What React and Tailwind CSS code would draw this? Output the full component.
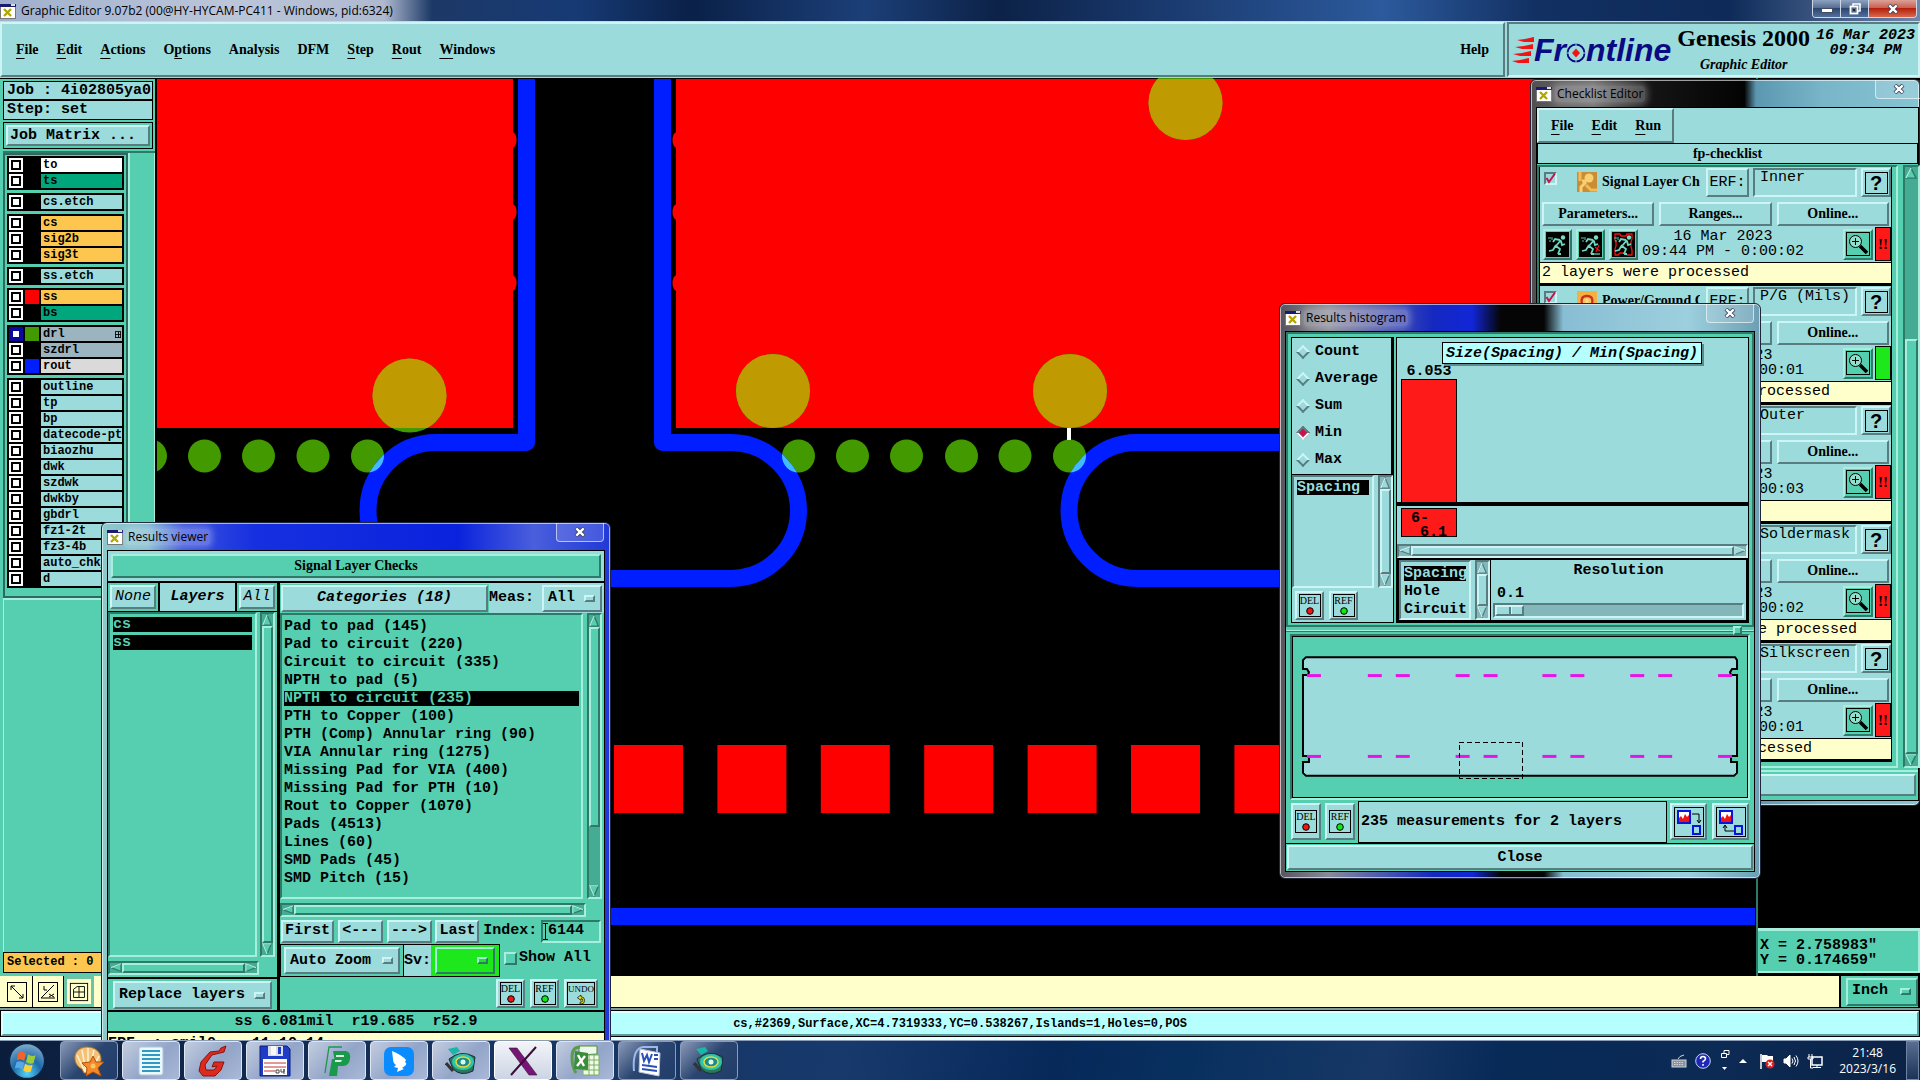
import React from "react";

const SERIF = "font-['Liberation_Serif',serif] font-bold text-[14px] leading-[18px]";
const MONO = "font-['Liberation_Mono',monospace] text-[15px] leading-[18px]";
const MONO_SM = "font-['Liberation_Mono',monospace] font-bold text-[12px] leading-[14px]";
const UI = "font-['Open_Sans',sans-serif] text-[12px] leading-4";

const CY_OUT = "border-2 border-t-[#cdf5f5] border-l-[#cdf5f5] border-b-[#587c80] border-r-[#587c80]";
const CY_IN = "border-2 border-t-[#587c80] border-l-[#587c80] border-b-[#cdf5f5] border-r-[#cdf5f5]";
const GR_OUT = "border-2 border-t-[#a8eedd] border-l-[#a8eedd] border-b-[#2d7a68] border-r-[#2d7a68]";
const GR_IN = "border-2 border-t-[#2d7a68] border-l-[#2d7a68] border-b-[#a8eedd] border-r-[#a8eedd]";

function Btn({ className = "", children, ...rest }) {
  return (
    <button type="button" className={`flex items-center justify-center whitespace-nowrap bg-[#9bdbdb] ${CY_OUT} ${className}`} {...rest}>
      {children}
    </button>
  );
}

function OptionMenu({ label, value, className = "", tone = "cyan" }) {
  const look = tone === "cyan" ? `bg-[#9bdbdb] ${CY_OUT}` : tone === "lime" ? `bg-[#1ce81c] ${GR_OUT}` : `bg-[#55cfb0] ${GR_OUT}`;
  const notch = tone === "lime" ? `${GR_OUT} bg-[#1ce81c]` : tone === "cyan" ? `${CY_OUT} bg-[#9bdbdb]` : `${GR_OUT} bg-[#55cfb0]`;
  return (
    <div className={`flex items-center pr-[5px] ${look} ${className}`}>
      <select aria-label={label} defaultValue={value} className="min-w-0 flex-1 appearance-none bg-transparent pl-1 font-bold outline-none">
        <option value={value}>{value}</option>
      </select>
      <span className={`h-[7px] w-[11px] shrink-0 ${notch}`} />
    </div>
  );
}

function Arrow({ dir, tone }) {
  const light = tone === "green" ? "#a8eedd" : "#cdf5f5";
  const dark = tone === "green" ? "#2d7a68" : "#587c80";
  const pts = {
    up: "6,1 11,12 1,12",
    down: "1,1 11,1 6,12",
    left: "1,6 12,1 12,11",
    right: "12,6 1,1 1,11",
  }[dir];
  const hi = { up: "1,12 6,1", down: "6,12 1,1 11,1", left: "1,6 12,1", right: "1,11 1,1 12,6" }[dir];
  return (
    <svg viewBox="0 0 13 13" className="block h-full w-full" preserveAspectRatio="none" aria-hidden="true">
      <polygon points={pts} fill={tone === "green" ? "#55cfb0" : "#9bdbdb"} stroke={dark} strokeWidth="1.5" />
      <polyline points={hi} fill="none" stroke={light} strokeWidth="1.5" />
    </svg>
  );
}

function VScroll({ className = "", tone = "green", before = 0, after = 0 }) {
  const inn = tone === "green" ? `${GR_IN} bg-[#45ab93]` : `${CY_IN} bg-[#84b7b9]`;
  const out = tone === "green" ? `${GR_OUT} bg-[#55cfb0]` : `${CY_OUT} bg-[#9bdbdb]`;
  return (
    <div className={`flex w-[15px] shrink-0 flex-col ${inn} ${className}`}>
      <button type="button" aria-label="Scroll up" className="h-[12px] shrink-0"><Arrow dir="up" tone={tone} /></button>
      <span style={{ flexGrow: before }} />
      <span className={`${out}`} style={{ flexGrow: 100 - before - after }} />
      <span style={{ flexGrow: after }} />
      <button type="button" aria-label="Scroll down" className="h-[12px] shrink-0"><Arrow dir="down" tone={tone} /></button>
    </div>
  );
}

function HScroll({ className = "", tone = "green" }) {
  const inn = tone === "green" ? `${GR_IN} bg-[#45ab93]` : `${CY_IN} bg-[#84b7b9]`;
  const out = tone === "green" ? `${GR_OUT} bg-[#55cfb0]` : `${CY_OUT} bg-[#9bdbdb]`;
  return (
    <div className={`flex h-[14px] shrink-0 ${inn} ${className}`}>
      <button type="button" aria-label="Scroll left" className="w-[12px] shrink-0"><Arrow dir="left" tone={tone} /></button>
      <span className={`flex-1 ${out}`} />
      <button type="button" aria-label="Scroll right" className="w-[12px] shrink-0"><Arrow dir="right" tone={tone} /></button>
    </div>
  );
}

function WinIcon() {
  return (
    <svg viewBox="0 0 16 16" className="h-4 w-4 shrink-0" shapeRendering="crispEdges" aria-hidden="true">
      <rect x="0" y="1" width="16" height="15" fill="#777" />
      <rect x="1" y="4" width="14" height="11" fill="#fff" />
      <rect x="0" y="1" width="16" height="3" fill="#1a1a70" />
      <rect x="11" y="1" width="4" height="2" fill="#ddd" />
      <path d="M4 6l7 7M11 6l-7 7" stroke="#b0a800" strokeWidth="2.4" shapeRendering="auto" />
    </svg>
  );
}

function CloseX() {
  return (
    <svg viewBox="0 0 12 10" className="h-[10px] w-3" aria-hidden="true">
      <path d="M2 1l8 8M10 1L2 9" stroke="#333a55" strokeWidth="4" />
      <path d="M2.3 1.3l7.4 7.4M9.7 1.3L2.3 8.7" stroke="#fff" strokeWidth="2.4" />
    </svg>
  );
}

function ChipIcon({ text, children }) {
  return (
    <span className="flex h-[23px] w-[22px] flex-col items-center border border-black font-['Liberation_Serif',serif] text-[10px] font-normal leading-[12px]">
      <span className="whitespace-nowrap">{text}</span>
      {children}
    </span>
  );
}
const Dot = ({ color }) => (
  <svg viewBox="0 0 8 8" className="h-2 w-2" aria-hidden="true">
    <circle cx="4" cy="4" r="3.3" fill={color} stroke="#000" />
  </svg>
);
const DelBtn = ({ className }) => (
  <Btn aria-label="Delete" className={className}><ChipIcon text="DEL"><Dot color="#f01414" /></ChipIcon></Btn>
);
const RefBtn = ({ className }) => (
  <Btn aria-label="Reference" className={className}><ChipIcon text="REF"><Dot color="#14e814" /></ChipIcon></Btn>
);

/* ---------- main window ---------- */

function TitleBar() {
  return (
    <header className={`flex h-[22px] items-center justify-between border-b border-[#c5d6e6] bg-[linear-gradient(90deg,#9fb0cd_0,#bcc6da_12%,#aeb9d0_20%,#1c3866_22.5%,#173a75_30%,#0a2148_36%,#1c3f78_45%,#0c2247_52%,#19386c_60%,#2c5a9c_72%,#123062_80%,#0d2a58_90%,#6f86ad_100%)] ${UI}`}>
      <div className="flex items-center gap-[5px]">
        <WinIcon />
        <h1>Graphic Editor 9.07b2 (00@HY-HYCAM-PC411 - Windows, pid:6324)</h1>
      </div>
      <div className="mr-[3px] flex h-[18px] self-start overflow-hidden rounded-b border border-t-0 border-[#cfd8e6]">
        <button type="button" aria-label="Minimize" className="flex w-[28px] items-center justify-center border-r border-[#cfd8e6] bg-[linear-gradient(#8ea2c0,#52698f_50%,#2d4671_50%,#50709b)]">
          <span className="mt-1 h-[5px] w-3 border border-[#444d60] bg-white" />
        </button>
        <button type="button" aria-label="Restore" className="flex w-[28px] items-center justify-center border-r border-[#cfd8e6] bg-[linear-gradient(#8ea2c0,#52698f_50%,#2d4671_50%,#50709b)]">
          <svg viewBox="0 0 12 12" className="h-3 w-3" fill="none" aria-hidden="true">
            <path d="M4 3V1h7v7H9" stroke="#fff" strokeWidth="1.6" />
            <rect x="1.5" y="3.5" width="7" height="7" fill="#54698d" stroke="#fff" strokeWidth="1.8" />
            <rect x="4" y="6" width="2" height="2" fill="#222" />
          </svg>
        </button>
        <button type="button" aria-label="Close" className="flex w-[47px] items-center justify-center bg-[linear-gradient(#dba298,#c95a4a_50%,#b5200c_50%,#d9684b)]"><CloseX /></button>
      </div>
    </header>
  );
}

const MENUS = [["", "F", "ile"], ["", "E", "dit"], ["", "A", "ctions"], ["O", "p", "tions"], ["Analysis", "", ""], ["DFM", "", ""], ["", "S", "tep"], ["", "R", "out"], ["", "W", "indows"]];
const MenuItem = ({ parts }) => (
  <button type="button">
    {parts[0]}<span className="underline decoration-1 underline-offset-4">{parts[1]}</span>{parts[2]}
  </button>
);

function FrontlineLogo() {
  return (
    <div className="flex items-center">
      <svg viewBox="0 0 22 26" className="h-[26px] w-[22px]" aria-hidden="true">
        <g fill="#f01414">
          <path d="M5 3l8-1 9-2v5H12z" />
          <path d="M3 10l9-1 9-2v5H10z" />
          <path d="M1 17l9-1 9-2v5H8z" />
          <path d="M0 24l8-1 9-2v5H6z" />
        </g>
      </svg>
      <div className="flex items-center font-['Liberation_Sans',sans-serif] text-[32px] font-bold italic leading-8 text-[#0a0a82]">
        <span>Fr</span>
        <svg viewBox="0 0 20 20" className="mt-[6px] h-5 w-5" aria-label="o" role="img">
          <circle cx="10" cy="10" r="8.5" fill="none" stroke="#0a0a82" strokeWidth="1.8" />
          <path d="M10 5.500l4 4.500l-4 4.500l-4-4.500z" fill="#f01414" />
          <path d="M10 0v4M10 16v4M0 10h4M16 10h4" stroke="#9bdbdb" strokeWidth="1" />
        </svg>
        <span>ntline</span>
      </div>
    </div>
  );
}

function MenuBar() {
  return (
    <div className="flex h-[56px] bg-[#9bdbdb] pb-px">
      <nav className={`flex flex-1 items-center justify-between pl-[14px] pr-[14px] ${CY_OUT} ${SERIF}`}>
        <div className="flex gap-[18px]">{MENUS.map((m) => <MenuItem key={m.join("")} parts={m} />)}</div>
        <button type="button">Help</button>
      </nav>
      <div className={`ml-[2px] flex w-[413px] items-center justify-between pl-[3px] pr-[3px] ${CY_IN}`}>
        <FrontlineLogo />
        <div className="flex flex-col items-center">
          <strong className="pb-[6px] font-['Liberation_Serif',serif] text-[24px] leading-6">Genesis 2000</strong>
          <em className={SERIF}>Graphic Editor</em>
        </div>
        <div className="self-start pt-1 text-center font-['Liberation_Mono',monospace] text-[15px] font-bold italic leading-[15px]">
          <div>16 Mar 2023</div>
          <div>09:34 PM</div>
        </div>
      </div>
    </div>
  );
}

/* ---------- layer panel ---------- */

const CYAN = "bg-[#9bdbdb]", ORANGE = "bg-[#fdc74f]", GREEN = "bg-[#00a67c]", GREY = "bg-[#9bb4bf]";
const LAYER_GROUPS = [
  [["to", "bg-white"], ["ts", GREEN]],
  [["cs.etch", CYAN]],
  [["cs", ORANGE], ["sig2b", ORANGE], ["sig3t", ORANGE]],
  [["ss.etch", CYAN]],
  [["ss", ORANGE, "bg-[#ff0000]"], ["bs", GREEN]],
  [["drl", GREY, "bg-[#429a00]", true], ["szdrl", GREY], ["rout", "bg-[#dadada]", "bg-[#001eff]"]],
  ["outline", "tp", "bp", "datecode-ptc", "biaozhu", "dwk", "szdwk", "dwkby", "gbdrl", "fz1-2t", "fz3-4b", "auto_chk_", "d"].map((n) => [n, CYAN]),
];

function LayerRow({ name, tone, swatch = "bg-black", active }) {
  return (
    <label className="flex h-4 items-center gap-[2px]">
      <span className={`flex h-[14px] w-[14px] items-center justify-center ${active ? "bg-[#0a0a9a]" : "bg-white"}`}>
        <input type="checkbox" defaultChecked={active} aria-label={`Display ${name}`} className="h-[10px] w-[10px] appearance-none border-2 border-black bg-white checked:border-[#0a0a9a]" />
      </span>
      <span className={`h-[14px] w-[14px] ${swatch}`} />
      <span className={`flex h-[14px] flex-1 items-center justify-between overflow-hidden whitespace-nowrap pl-[2px] ${tone} ${MONO_SM}`}>
        {name}
        {active && (
          <svg viewBox="0 0 7 7" className="mr-px h-[7px] w-[6px]" shapeRendering="crispEdges" aria-hidden="true">
            <path d="M0 .5h7M0 6.500h7M.5 0v7M6.500 0v7M3.500 0v7M0 3.500h7" stroke="#000" fill="none" />
          </svg>
        )}
      </span>
    </label>
  );
}

function LayerPanel() {
  return (
    <aside className="flex w-[157px] shrink-0 flex-col border-r-2 border-t border-black bg-[#55cfb0] pl-[3px]">
      <div className={`mr-[2px] mt-[2px] ${MONO} font-bold`}>
        <div className="h-[19px] overflow-hidden whitespace-nowrap border border-black bg-[#9bdbdb] pl-[3px]">Job : 4i02805ya0</div>
        <div className="h-[20px] border border-black bg-[#9bdbdb] pl-[3px]">Step: set</div>
        <div className="mt-[2px] border border-black p-[2px]">
          <Btn className="h-[21px] w-full !justify-start pl-[2px]">Job Matrix ...</Btn>
        </div>
      </div>
      <div className="mt-[2px] flex border-t-2 border-[#2d7a68]">
        <div className="w-[125px] border-2 border-[#2d6a60] px-[2px] pb-2 pt-px">
          <div className="flex flex-col gap-[3px]">
            {LAYER_GROUPS.map((g, i) => (
              <div key={i} className="border border-black bg-black px-px">
                {g.map(([n, t, s, a]) => <LayerRow key={n} name={n} tone={t} swatch={s} active={a} />)}
              </div>
            ))}
          </div>
        </div>
        <div className="flex-1 border-l-2 border-r border-[#a8eedd]" />
      </div>
      <div className="flex-1 border-l border-t-2 border-[#a8eedd]" />
      <div className={`mb-[3px] h-[21px] border border-black bg-[#fdc74f] pl-[3px] pt-[2px] ${MONO_SM}`}>Selected : 0</div>
    </aside>
  );
}

/* ---------- board artwork ---------- */

const HOLES = [151.5, 205.5, 259.5, 314, 368.5, 799.5, 853.5, 907.5, 962.5, 1016, 1070.5];
const ROUTS = [
  "M527.500 79V442.500H437A68 68 0 0 0 437 578.500H640",
  "M663.500 79V442.500H731.500A68 68 0 0 1 731.500 578.500H560",
  "M1540 442.500H1138A68 68 0 0 0 1138 578.500H1540",
];

function BoardCanvas() {
  return (
    <svg viewBox="158 78 1599 898" preserveAspectRatio="xMinYMin slice" className="block h-full w-full bg-black" role="img" aria-label="Board artwork">
      <defs>
        <clipPath id="holes">{HOLES.map((x) => <circle key={x} cx={x} cy="456" r="16.5" />)}</clipPath>
        <clipPath id="pour"><path d="M157 79H514V428H157zM677 79H1560V428H677z" /></clipPath>
      </defs>
      <g fill="#f00">
        <path d="M157 79H514V428H157zM677 79H1560V428H677z" />
        {[140, 212, 283].map((y) => (
          <g key={y}>
            <ellipse cx="513" cy={y} rx="4.500" ry="8" />
            <ellipse cx="678" cy={y} rx="4.500" ry="8" />
          </g>
        ))}
        {Array.from({ length: 9 }, (_, i) => <rect key={i} x={615 + i * 103.400} y="745" width="69" height="68" />)}
      </g>
      {[[410.5, 395.5], [774, 391], [1071, 391], [1186.500, 103]].map(([x, y]) => (
        <g key={x}>
          <circle cx={x} cy={y} r="37" fill="#429a00" />
          <circle cx={x} cy={y} r="37" fill="#bf9a00" clipPath="url(#pour)" />
        </g>
      ))}
      {HOLES.map((x) => <circle key={x} cx={x} cy="456" r="16.5" fill="#429a00" />)}
      <g fill="none" stroke="#001eff" strokeWidth="17" strokeLinejoin="round">
        {ROUTS.map((d) => <path key={d} d={d} />)}
      </g>
      <g fill="none" stroke="#42baff" strokeWidth="17" clipPath="url(#holes)">
        {ROUTS.map((d) => <path key={d} d={d} />)}
      </g>
      <rect x="157" y="908" width="1599" height="17" fill="#001eff" />
      <rect x="1068" y="428" width="4" height="12" fill="#fff" />
    </svg>
  );
}

function Coordinates() {
  return (
    <aside className="flex w-[164px] shrink-0 flex-col border-l-2 border-[#2d7a68] bg-black">
      <div className="flex-1" />
      <div className="h-[45px] border-b-2 border-r-2 border-t-[3px] border-[#a8eedd] bg-[#55cfb0] pl-[2px] pt-[7px] font-['Liberation_Mono',monospace] text-[15px] font-bold leading-[15px]">
        <div>X = 2.758983"</div>
        <div>Y = 0.174659"</div>
      </div>
      <div className="h-[3px]" />
    </aside>
  );
}

function CommandBar() {
  const tool = "flex w-[31px] items-center justify-center border-r border-black bg-[#ffffcc]";
  return (
    <div className="flex h-8 shrink-0 border-b border-black bg-[#ffffcc] pl-[2px]">
      <button type="button" aria-label="Snap to point" className={tool}>
        <svg viewBox="0 0 22 22" className="h-[22px] w-[22px]" fill="none" stroke="#000" aria-hidden="true"><rect x="1.500" y="1.500" width="19" height="19" /><path d="M5 9V5h4M5 5l12 12M17 13v4h-4" /></svg>
      </button>
      <button type="button" aria-label="Angle" className={tool}>
        <svg viewBox="0 0 22 22" className="h-[22px] w-[22px]" fill="none" stroke="#000" aria-hidden="true"><rect x="1.500" y="1.500" width="19" height="19" /><path d="M4 17L17 4M4 17h14M7 5v4h3M12 13l5 3M17 13l-5 3" /></svg>
      </button>
      <button type="button" aria-label="Grid" className="flex w-[30px] items-center justify-center border-[3px] border-[#6fc3a5] bg-[#ffffcc]">
        <svg viewBox="0 0 22 22" className="h-[20px] w-[20px]" fill="none" stroke="#000" aria-hidden="true"><rect x="1.500" y="1.500" width="19" height="19" /><path d="M5 8l4-3h8v12H5zM11 5v12M5 11h12" /></svg>
      </button>
      <input aria-label="Command" className="min-w-0 flex-1 bg-transparent px-2 outline-none" />
      <div className="flex w-[81px] items-center border-l-2 border-r-2 border-black bg-[#55cfb0] pl-[5px]">
        <OptionMenu label="Units" value="Inch" tone="green" className="h-[28px] w-full font-['Liberation_Mono',monospace] text-[15px]" />
      </div>
    </div>
  );
}

function MessageBar() {
  return (
    <div className="h-8 shrink-0 border-t-2 border-[#7c9a9a] bg-[#e6ffff] pb-[3px]">
      <div className="h-full border border-black">
        <p className={`flex h-full items-center justify-center border-2 border-b-[#5f9b9b] border-l-[#dcffff] border-r-[#5f9b9b] border-t-[#dcffff] bg-[#b5ffff] ${MONO_SM}`}>
          cs,#2369,Surface,XC=4.7319333,YC=0.538267,Islands=1,Holes=0,POS
        </p>
      </div>
    </div>
  );
}

/* ---------- floating windows ---------- */

function FloatWindow({ title, className, bar, close = "right-[6px] w-12", children }) {
  return (
    <section aria-label={title} className={`absolute flex flex-col rounded-md border border-[#20263a] px-[5px] shadow-[inset_0_0_0_1px_rgba(255,255,255,.6)] ${bar} ${className}`}>
      <header className={`flex h-[27px] shrink-0 items-center ${UI}`}>
        <WinIcon />
        <h2 className="ml-[3px] rounded bg-white/25 px-[2px] shadow-[0_0_6px_3px_rgba(255,255,255,.25)]">{title}</h2>
      </header>
      <button type="button" aria-label={`Close ${title}`} className={`absolute top-0 flex h-[19px] items-center justify-center rounded-b border border-t-0 border-white/60 bg-white/15 ${close}`}><CloseX /></button>
      {children}
    </section>
  );
}

const CATEGORIES = ["Pad to pad (145)", "Pad to circuit (220)", "Circuit to circuit (335)", "NPTH to pad (5)", "NPTH to circuit (235)", "PTH to Copper (100)", "PTH (Comp) Annular ring (90)", "VIA Annular ring (1275)", "Missing Pad for VIA (400)", "Missing Pad for PTH (10)", "Rout to Copper (1070)", "Pads (4513)", "Lines (60)", "SMD Pads (45)", "SMD Pitch (15)"];

function ListItem({ on, children, tone = "text-[#55cfb0]" }) {
  return (
    <li className="h-[18px]">
      <button type="button" className={`block h-[15px] w-full overflow-hidden whitespace-nowrap text-left leading-[15px] ${on ? `bg-black ${tone}` : ""}`}>{children}</button>
    </li>
  );
}

function ResultsViewer() {
  return (
    <FloatWindow title="Results viewer" className="left-[101px] top-[500px] w-[510px]" bar="bg-[linear-gradient(90deg,#8fcaca_0,#7fb9cf_9%,#3b52dc_16%,#1630e0_30%,#0a22dd_70%,#4a5fdc_85%,#2038d8_100%)]">
      <div className={`border border-black bg-[#55cfb0] ${MONO} font-bold`}>
        <div className="border-b-2 border-black bg-[#9bdbdb] p-[3px]">
          <h3 className={`flex h-[24px] items-center justify-center bg-[#55cfb0] ${GR_OUT} ${SERIF}`}>Signal Layer Checks</h3>
        </div>
        <div className="flex h-[429px] border-b-2 border-black">
          <div className="flex w-[172px] shrink-0 flex-col border-r-[3px] border-black">
            <div className="flex h-[29px] border-b border-black italic">
              <Btn className="m-[2px] w-[46px] font-normal">None</Btn>
              <div className="flex flex-1 items-center justify-center border-x-2 border-black bg-[#9bdbdb]">Layers</div>
              <Btn className="m-[2px] w-[36px] font-normal">All</Btn>
            </div>
            <div className="flex min-h-0 flex-1 gap-[3px] pr-[2px]">
              <ul className={`flex-1 p-[3px] ${GR_IN}`}>
                <ListItem on>cs</ListItem>
                <ListItem on>ss</ListItem>
              </ul>
              <VScroll />
            </div>
            <HScroll className="mb-[2px] mr-[18px] mt-1" />
            <div className="h-[33px] border-t-2 border-black px-[5px] pt-[2px]">
              <OptionMenu label="Layer mode" value="Replace layers" className="h-[28px] w-full" />
            </div>
          </div>
          <div className="flex min-w-0 flex-1 flex-col">
            <div className="flex h-[30px] items-center bg-[#9bdbdb] pr-[2px]">
              <div className="flex-1 bg-[#55cfb0] p-px"><Btn className="h-[27px] w-full italic">Categories (18)</Btn></div>
              <span className="w-[53px]">Meas:</span>
              <OptionMenu label="Measurement filter" value="All" className="h-[27px] w-[60px]" />
            </div>
            <div className="flex h-[286px] gap-1 pr-[2px]">
              <ul className={`flex-1 px-[2px] py-1 ${GR_IN}`}>
                {CATEGORIES.map((c) => <ListItem key={c} on={c === "NPTH to circuit (235)"}>{c}</ListItem>)}
              </ul>
              <VScroll after={23} />
            </div>
            <HScroll className="mr-[18px] mt-1" />
            <div className="mt-[2px] flex h-[24px] items-center justify-between pl-px pr-[3px]">
              <Btn className="h-[23px] w-[53px]">First</Btn>
              <Btn className="h-[23px] w-[45px]" aria-label="Previous">&lt;---</Btn>
              <Btn className="h-[23px] w-[45px]" aria-label="Next">---&gt;</Btn>
              <Btn className="h-[23px] w-[44px]">Last</Btn>
              <label htmlFor="index">Index:</label>
              <div className={`flex h-[23px] w-[60px] items-center ${GR_IN}`}>
                <svg viewBox="0 0 5 17" className="h-[17px] w-[5px]" shapeRendering="crispEdges" aria-hidden="true"><path d="M0 .5h5M2.500 0v17M0 16.500h5" stroke="#000" fill="none" /></svg>
                <input id="index" defaultValue="6144" className="min-w-0 flex-1 bg-transparent font-bold outline-none" />
              </div>
            </div>
            <div className="mt-px flex h-[33px]">
              <div className="flex h-[33px] border border-black">
                <div className="border-r border-black px-[3px] pt-[2px]"><OptionMenu label="Zoom mode" value="Auto Zoom" className="h-[27px] w-[116px]" /></div>
                <span className="flex items-center bg-[#9bdbdb]">Sv:</span>
                <div className="bg-[#1ce81c] px-1 pt-[2px]"><OptionMenu label="Severity" value=" " tone="lime" className="h-[27px] w-[60px]" /></div>
              </div>
              <label className="ml-1 flex h-[28px] items-center gap-[2px]">
                <input type="checkbox" className={`h-[13px] w-[13px] appearance-none ${GR_OUT}`} />
                <span>Show All</span>
              </label>
            </div>
            <div className="mt-[2px] flex justify-end gap-[5px] pr-[6px]">
              <DelBtn className="h-[29px] w-[29px]" />
              <RefBtn className="h-[29px] w-[29px]" />
              <Btn aria-label="Undo" className="h-[29px] w-[34px]">
                <span className="flex h-[23px] w-[28px] flex-col items-center border border-black font-['Liberation_Serif',serif] text-[9px] font-normal leading-[12px]">
                  UNDO
                  <svg viewBox="0 0 10 10" className="h-[9px] w-[10px]" aria-hidden="true"><path d="M1 3l4-3v2q4 0 4 4t-4 4H4V8q3 0 3-2t-2-2v2z" fill="#f0e814" stroke="#000" strokeWidth=".8" /></svg>
                </span>
              </Btn>
            </div>
          </div>
        </div>
        <p className="flex h-[21px] items-center justify-center whitespace-pre border-b-2 border-black">ss 6.081mil  r19.685  r52.9</p>
        <p className="h-[40px] whitespace-pre bg-[#ffffcc] pt-[2px]">ERF  : smil0    11 10 14</p>
      </div>
    </FloatWindow>
  );
}

const CHECKS = [
  { name: "Signal Layer Checks", erf: "Inner", time: "0:00:02", status: "bad", msg: "2 layers were processed", art: "trace" },
  { name: "Power/Ground Checks", erf: "P/G (Mils)", time: "0:00:01", status: "ok", msg: "No power/ground layers processed", art: "plane" },
  { name: "Signal Layer Checks", erf: "Outer", time: "0:00:03", status: "bad", msg: "2 layers processed", art: "trace" },
  { name: "Solder Mask Checks", erf: "Soldermask", time: "0:00:02", status: "bad", msg: "No soldermask layers were processed", art: "trace" },
  { name: "Silkscreen Checks", erf: "Silkscreen", time: "0:00:01", status: "bad", msg: "No silkscreen layers processed", art: "trace" },
];

function Runner({ kind }) {
  const frame = kind === "all";
  return (
    <button type="button" aria-label={`Run ${kind}`} className={`flex h-[31px] w-[29px] items-center justify-center bg-[#55cfb0] ${GR_OUT}`}>
      <svg viewBox="0 0 23 25" className="h-[25px] w-[23px] bg-black" fill="none" aria-hidden="true">
        {frame && <path d="M3 2h5l1 2h5l1-2h5v5l-1 3v5l1 3v5h-5l-2-2h-5l-2 2H3v-6l1-3v-4L3 8z" stroke="#f01414" strokeWidth="1.3" />}
        <circle cx="17" cy="5.500" r="2.200" fill="#7fdcc4" />
        <path d="M15 8l-5 6M14 8l-5-1-2 3M15 9l1 4 3-1M10 14l4 3-2 5M10 13l-3 5-4 1M12 22h3" stroke="#6fd8be" strokeWidth="1.800" />
        <path d="M2 6h3M6 5v3M3 9h2" stroke="#55cfb0" strokeWidth="1" />
        {kind === "selected" && (
          <>
            <path d="M16 15l5 4M20 13l-3 7" stroke="#f01414" strokeWidth="1.200" />
            <path d="M12 22h9" stroke="#6fd8be" strokeWidth="1.200" />
          </>
        )}
      </svg>
    </button>
  );
}

function ArtIcon({ kind }) {
  return kind === "plane" ? (
    <svg viewBox="0 0 20 20" className="h-5 w-5 shrink-0" aria-hidden="true">
      <rect width="20" height="20" fill="#f5b042" />
      <path d="M5 13q-2-8 5-8t5 8" fill="#f7c25c" stroke="#c8321e" strokeWidth="2.400" />
      <path d="M2 15h5v-3M18 15h-5v-3" stroke="#c8321e" strokeWidth="2" fill="none" />
      <path d="M10 8v7" stroke="#f9d98c" strokeWidth="3" />
    </svg>
  ) : (
    <svg viewBox="0 0 20 20" className="h-5 w-5 shrink-0" aria-hidden="true">
      <rect width="20" height="20" fill="#c98d35" />
      <path d="M3 0v9M20 18h-6l-5-5" stroke="#f3bb55" strokeWidth="3" fill="none" />
      <circle cx="12" cy="6" r="4.500" fill="#f9cf74" />
      <path d="M9 10l-5 5v5M9 9H5" stroke="#f9cf74" strokeWidth="3" fill="none" />
    </svg>
  );
}

function CheckItem({ item }) {
  return (
    <li className="flex h-[119px] flex-col border-x border-b-[3px] border-black bg-[#9bdbdb] pt-px">
      <div className="flex h-[29px] items-start pl-1">
        <span className="relative mt-1 h-[13px] w-[13px] shrink-0">
          <input type="checkbox" defaultChecked aria-label={item.name} className={`block h-[13px] w-[13px] appearance-none ${CY_IN}`} />
          <svg viewBox="0 0 13 13" className="pointer-events-none absolute inset-0" aria-hidden="true"><path d="M2.500 6l2.500 4L11 1.500" fill="none" stroke="#c8144c" strokeWidth="2" /></svg>
        </span>
        <span className="ml-5 mt-1"><ArtIcon kind={item.art} /></span>
        <span className={`ml-[5px] mt-[5px] w-[98px] overflow-hidden whitespace-nowrap ${SERIF}`}>{item.name}</span>
        <Btn className="ml-[6px] h-[29px] w-[43px]">ERF:</Btn>
        <input aria-label={`${item.name} ERF`} defaultValue={item.erf} className={`ml-1 h-[29px] w-[104px] bg-transparent pb-[11px] pl-[5px] outline-none ${CY_IN}`} />
        <Btn aria-label="Help" className="ml-1 h-[29px] w-[30px] font-['Liberation_Sans',sans-serif]">
          <span className="flex h-[22px] w-[23px] items-center justify-center border border-black text-[20px] font-bold">?</span>
        </Btn>
      </div>
      <div className={`mt-[5px] grid grid-cols-3 gap-[5px] px-[2px] ${SERIF}`}>
        <Btn className="h-6">Parameters...</Btn>
        <Btn className="h-6">Ranges...</Btn>
        <Btn className="h-6">Online...</Btn>
      </div>
      <div className="flex h-[36px] items-center pl-[3px]">
        <div className="flex gap-1"><Runner kind="once" /><Runner kind="selected" /><Runner kind="all" /></div>
        <p className="ml-1 whitespace-nowrap text-center leading-[15px]">16 Mar 2023<br />09:44 PM - {item.time}</p>
        <div className="flex-1" />
        <button type="button" aria-label="View results" className={`mr-[2px] flex h-[31px] w-[30px] items-center justify-center bg-[#55cfb0] ${GR_OUT}`}>
          <svg viewBox="0 0 24 24" className="h-6 w-6" fill="none" stroke="#000" aria-hidden="true">
            <rect x=".5" y=".5" width="23" height="23" />
            <circle cx="9.500" cy="9.500" r="6" fill="#8fe0cc" />
            <path d="M9.500 6v7M6 9.500h7" />
            <path d="M14 14l7 7" strokeWidth="3.500" />
          </svg>
        </button>
        <span className={`flex h-[34px] w-4 items-center justify-center border border-black font-['Liberation_Serif',serif] font-bold ${item.status === "ok" ? "bg-[#1ce81c]" : "bg-[#ff1818]"}`}>{item.status === "bad" && "!!"}</span>
      </div>
      <p className="h-[21px] whitespace-nowrap border-t border-black bg-[#ffffcc] pl-[2px] pt-px">{item.msg}</p>
    </li>
  );
}

function ChecklistEditor() {
  return (
    <FloatWindow title="Checklist Editor" className="left-[1530px] right-0 top-[57px]" close="right-[-4px] w-12" bar="bg-[linear-gradient(90deg,#514f52_0,#6b6b6d_16%,#151515_30%,#030303_55%,#5c97b0_58%,#78b5c8_75%,#86c4d4_100%)] !pr-0">
      <div className={`border border-black bg-[#55cfb0] ${MONO}`}>
        <div className="bg-[#9bdbdb]">
          <nav className={`flex h-[35px] w-[137px] items-center gap-[18px] pl-[12px] ${CY_OUT} ${SERIF}`}>
            <MenuItem parts={["", "F", "ile"]} /><MenuItem parts={["", "E", "dit"]} /><MenuItem parts={["", "R", "un"]} />
          </nav>
          <h3 className={`flex h-[21px] items-center justify-center border border-black ${SERIF}`}>fp-checklist</h3>
        </div>
        <div className="flex pb-[2px] pt-px">
          <div className={`flex-1 pb-1 ${GR_IN}`}>
            <ul className="mr-1">{CHECKS.map((c, i) => <CheckItem key={i} item={c} />)}</ul>
          </div>
          <VScroll before={28} className="ml-[5px] mr-[3px] w-[17px]" />
        </div>
        <div className="border-t-2 border-[#a8eedd] p-[2px]">
          <Btn className="h-[22px] w-full" aria-label="Status" />
        </div>
        <div className="h-[2px] bg-[#55cfb0]" />
      </div>
      <div className="h-1" />
    </FloatWindow>
  );
}

const DASHES = [1306, 1367, 1395, 1455, 1483, 1542, 1570, 1630, 1658, 1718];

function BoardMap() {
  return (
    <svg viewBox="1292 636 455 160" className="block h-[160px] w-full bg-[#55cfb0]" role="img" aria-label="Measurement map">
      <path d="M1305 656h430l2 3v9h-5l-2 3 1 3h6v81h-6v6h6v11l-3 3h-429l-3-3v-11h6v-6h-6v-81h5l1-3-2-3h-4v-9z" fill="#9bdbdb" stroke="#000" strokeWidth="2" />
      {DASHES.map((x) => (
        <g key={x} fill="#e614e6">
          <rect x={x} y="673" width="14" height="3" />
          <rect x={x} y="754" width="14" height="3" />
        </g>
      ))}
      <rect x="1458.500" y="741.500" width="64" height="36" fill="none" stroke="#000" strokeDasharray="5 3" shapeRendering="crispEdges" />
    </svg>
  );
}

function SendIcon({ up }) {
  return (
    <svg viewBox="0 0 30 30" className="h-[30px] w-[30px]" fill="none" aria-hidden="true">
      <rect x=".5" y=".5" width="29" height="29" stroke="#000" />
      <rect x="4" y="4" width="12" height="12" fill="#f01414" stroke="#0a14e0" strokeWidth="2" />
      <path d="M5 5h10v3l-2 2-2-3-2 5-2-3-2 2z" fill="#fff" />
      <rect x="19" y="19" width="7" height="8" stroke="#0a14e0" strokeWidth="2" />
      {up ? <path d="M18 24h-9v-5M7 21l2-3 2 3" stroke="#000" /> : <path d="M18 7h7v8M23 13l2 3 2-3" stroke="#000" />}
    </svg>
  );
}

function Histogram() {
  return (
    <FloatWindow title="Results histogram" className="left-[1279px] top-[281px] w-[482px]" bar="bg-[linear-gradient(90deg,#56545c_0,#8a8a98_10%,#1428c0_32%,#1226d8_40%,#050505_46%,#050505_55%,#88bed4_59%,#9dd0de_85%,#6d9fb4_100%)]">
      <div className={`mb-[6px] border border-black bg-[#55cfb0] ${MONO} font-bold`}>
        <div className="flex h-[295px] border-2 border-[#2d7a68] p-[3px] pb-[2px]">
          <div className="flex w-[103px] shrink-0 flex-col border border-black bg-[#9bdbdb]">
            <fieldset className="h-[137px] border-b border-r-2 border-black py-[5px] pl-[6px]">
              <div className="flex flex-col gap-[9px]">
                {["Count", "Average", "Sum", "Min", "Max"].map((r) => (
                  <label key={r} className="flex items-center gap-[7px]">
                    <input type="radio" name="stat" defaultChecked={r === "Min"} className={`h-[10px] w-[10px] rotate-45 appearance-none checked:border-b-[#e8ffff] checked:border-l-[#587c80] checked:border-r-[#e8ffff] checked:border-t-[#587c80] checked:bg-[#c8144c] ${CY_OUT}`} />
                    <span>{r}</span>
                  </label>
                ))}
              </div>
            </fieldset>
            <div className="flex min-h-0 flex-1 gap-1">
              <ul className={`flex-1 p-[3px] ${CY_IN}`}><ListItem on tone="text-[#9bdbdb]">Spacing</ListItem></ul>
              <VScroll tone="cyan" />
            </div>
            <div className="flex gap-[5px] p-[3px] pb-[2px]"><DelBtn className="h-[29px] w-[29px]" /><RefBtn className="h-[29px] w-[29px]" /></div>
          </div>
          <div className="ml-[2px] flex min-w-0 flex-1 flex-col border border-black bg-[#9bdbdb]">
            <div className="relative flex h-[168px] shrink-0 items-end border-b-4 border-black pl-1">
              <div className="flex flex-col items-center">
                <span className="leading-[15px]">6.053</span>
                <div className="h-[123px] w-[56px] border border-b-0 border-black bg-[#ff1a1a]" />
              </div>
              <div className="absolute left-[45px] top-1 border border-black bg-[#b5ffff] px-[3px] pt-[2px] italic shadow-[2px_2px_0_#5f8a8c]">Size(Spacing) / Min(Spacing)</div>
            </div>
            <div className="pl-1 pt-[2px]">
              <div className="h-[29px] w-[56px] border border-black bg-[#ff1a1a] pl-[9px] pt-[3px] leading-[14px]">6-<br />&nbsp;6.1</div>
            </div>
            <HScroll tone="cyan" className="mt-auto" />
            <div className="flex h-[64px] shrink-0 border-2 border-black">
              <ul className={`w-[72px] overflow-hidden px-[3px] pt-1 ${CY_IN}`}>
                <ListItem on tone="text-[#9bdbdb]">Spacing</ListItem>
                <ListItem>Hole</ListItem>
                <ListItem>Circuit</ListItem>
              </ul>
              <VScroll tone="cyan" className="ml-1 w-[14px]" />
              <div className="flex flex-1 flex-col justify-between border-l border-black p-[2px]">
                <label htmlFor="resolution" className="text-center">Resolution</label>
                <div>
                  <output className="block pl-1">0.1</output>
                  <input id="resolution" type="range" min="0" max="100" defaultValue="0" className={`block h-[15px] w-full appearance-none bg-[#84b7b9] ${CY_IN} [&::-webkit-slider-thumb]:h-[11px] [&::-webkit-slider-thumb]:w-[29px] [&::-webkit-slider-thumb]:appearance-none [&::-webkit-slider-thumb]:border-2 [&::-webkit-slider-thumb]:border-b-[#587c80] [&::-webkit-slider-thumb]:border-l-[#cdf5f5] [&::-webkit-slider-thumb]:border-r-[#587c80] [&::-webkit-slider-thumb]:border-t-[#cdf5f5] [&::-webkit-slider-thumb]:bg-[linear-gradient(90deg,#9bdbdb_48%,#587c80_48%,#587c80_54%,#cdf5f5_54%,#cdf5f5_58%,#9bdbdb_58%)]`} />
                </div>
              </div>
            </div>
          </div>
        </div>
        <div className="flex h-[7px] items-center">
          <div className="h-[2px] flex-1 border-t border-[#a8eedd] bg-[#2d7a68]" />
          <button type="button" aria-label="Resize panes" className={`h-[9px] w-[9px] bg-[#55cfb0] ${GR_OUT}`} />
          <div className="h-[2px] w-3 border-t border-[#a8eedd] bg-[#2d7a68]" />
        </div>
        <div className="mx-1 border-2 border-b-[#a8eedd] border-l-[#2d7a68] border-r-[#a8eedd] border-t-[#2d7a68]"><div className="border border-black"><BoardMap /></div></div>
        <div className="flex h-[43px] items-center gap-[3px] px-[5px]">
          <DelBtn className="mr-px h-[37px] w-[30px]" />
          <RefBtn className="h-[37px] w-[30px]" />
          <p className="flex h-[42px] flex-1 items-center border border-black bg-[#9bdbdb] pl-[2px]">235 measurements for 2 layers</p>
          <Btn aria-label="Send to" className="h-[37px] w-[37px]"><SendIcon /></Btn>
          <Btn aria-label="Bring back" className="ml-[2px] h-[37px] w-[37px]"><SendIcon up /></Btn>
        </div>
        <div className="border-t border-black p-px"><Btn className="h-[25px] w-full">Close</Btn></div>
      </div>
    </FloatWindow>
  );
}

/* ---------- taskbar ---------- */

const TASK_ICONS = {
  Shell: (
    <>
      <path d="M14 2C6 2 1 8 2 14c0 4 3 8 7 10l2 4h7l3-4c5-2 7-6 7-10C28 7 22 2 14 2z" fill="#f2c27a" stroke="#b87a28" />
      <path d="M12 27L4 10M13 27L9 5M15 27V3M16 27l5-22M18 26l8-15" stroke="#fff0cc" strokeWidth="1.500" />
      <path d="M20 11l3 6 8 0-6 6 3 8-8-4-7 4 1-8-5-5 8-1z" fill="#f28a28" stroke="#b04e0c" />
      <circle cx="20" cy="21" r="2.500" fill="#ffc46a" />
    </>
  ),
  Notepad: (
    <>
      <rect x="4" y="2" width="24" height="28" rx="2" fill="#eaf7fc" stroke="#a8c8dc" />
      <path d="M7 6h18M7 10h18M7 14h18M7 18h18M7 22h18M7 26h18" stroke="#2f9ac4" strokeWidth="2" />
    </>
  ),
  Genesis: <path d="M29 1l-2 6-12 3-7 10 1 5h8l3-4-5 1 2-5h10l-3 8-6 6H6l-4-5 2-9L13 7l9-1 2-3z" fill="#dc2a1e" stroke="#8a1410" />,
  "Total Commander": (
    <>
      <path d="M1 1h27l3 3v27H1z" fill="#1e3cc8" stroke="#0c1e78" />
      <rect x="9" y="1" width="15" height="10" fill="#d8dce8" /><rect x="12" y="1" width="5" height="9" fill="#f8f8f8" /><rect x="19" y="2" width="3" height="7" fill="#1e3cc8" />
      <rect x="4" y="14" width="24" height="16" fill="#fff" />
      <path d="M5 18h22M5 22h22M5 26h11" stroke="#c83232" /><path d="M17 25h3v3h-3zM22 24v3h3v-3v5" fill="none" stroke="#444" />
    </>
  ),
  Project: (
    <>
      <path d="M12 6h13q5 1 4 8t-7 7h-5l-1 10H8l3-17h12l-1 3h-8" fill="#189a4a" />
      <path d="M4 28L8 2h13" fill="none" stroke="#189a4a" strokeWidth="1.300" />
      <path d="M15 10h8v2h-8zM14 15h7l-1 2h-6z" fill="#d8f0e0" />
    </>
  ),
  DingTalk: (
    <>
      <rect x="1" y="2" width="30" height="29" rx="7" fill="#0a8cff" />
      <path d="M9 6q10 4 14 9l-1 2q2 1 1 3l-4 3 2 1-7 3 1-4-4-1 2-2q-3-2-3-6z" fill="#fff" />
    </>
  ),
  Camera: (
    <>
      <path d="M3 4l9-2 3 4-7 4z" fill="#18b8a8" /><path d="M4 14q12-10 26-2l-2 14q-12 6-20-2z" fill="#28785a" stroke="#1c2c48" />
      <ellipse cx="18" cy="17" rx="11" ry="8" fill="#30c4a8" /><ellipse cx="18" cy="17" rx="7" ry="5" fill="#1c8a8a" stroke="#e8d83c" strokeWidth="1.500" /><circle cx="18" cy="17" r="2.500" fill="#d8ffe8" />
      <path d="M1 18l7 8" stroke="#333" strokeWidth="3" />
    </>
  ),
  X: (
    <>
      <path d="M2 3h8l20 27h-8z" fill="#7a1478" stroke="#222" strokeWidth=".6" /><path d="M29 2L4 30" stroke="#3c0c3c" strokeWidth="2" />
    </>
  ),
  Excel: (
    <>
      <path d="M10 1h18v8L10 10z" fill="#eef8ea" stroke="#4a8c3c" />
      <path d="M11 2Q3 2 3 12q0 10 4 16" stroke="#5a9c4c" strokeWidth="3" fill="none" />
      <path d="M14 10h16v20H14zM14 15h16M14 20h16M14 25h16M20 10v20M25 10v20" fill="#f0fae8" stroke="#7ab060" />
      <path d="M6 6l13 2v17L5 24z" fill="#3c8c3c" /><path d="M9 10l6 11M16 11L8 21" stroke="#fff" strokeWidth="2.400" />
    </>
  ),
  Word: (
    <>
      <path d="M3 26Q1 4 12 2h14v5" fill="none" stroke="#9cb8ec" strokeWidth="2" />
      <path d="M9 4l20 4-1 23-20-4z" fill="#fff" stroke="#b8c4dc" />
      <path d="M11 8l2 8 3-6 2 7 3-8M23 10h4M23 14h4M11 20l15 2M11 24l15 2" stroke="#2a50b8" strokeWidth="2" fill="none" />
    </>
  ),
};
const TASKS = ["Shell", "Notepad", "Genesis", "Total Commander", "Project", "DingTalk", "Camera", "X", "Excel", "Word", "Camera"];

const TASK_LOOK = {
  idle: "border-[#dfe6f2] bg-[linear-gradient(135deg,#c3cde0,#93a5c8_55%,#a9b8d8)]",
  active: "border-white bg-[linear-gradient(#f2f4f8,#ccd4e4)]",
  dim: "border-[#8c9cb8] bg-[linear-gradient(135deg,#8a9ab8,#2a4570_50%,#203c68)]",
};
const taskLook = (i) => (i === 0 || i > 8 ? "dim" : i === 7 ? "active" : "idle");

function Taskbar() {
  return (
    <footer className="relative z-10 flex h-10 shrink-0 items-stretch border-t border-[#8a9cb8] bg-[linear-gradient(100deg,#0b1d3c_0,#16345f_25%,#17396c_44%,#06295a_55%,#08305f_62%,#173866_72%,#082a58_78%,#0c2a54_90%,#0b2245_100%)]">
      <button type="button" aria-label="Start" className="ml-2 mr-[14px] flex items-center">
        <svg viewBox="0 0 40 40" className="h-[38px] w-[38px]" aria-hidden="true">
          <defs><radialGradient id="orb" cx=".5" cy=".85" r=".9"><stop offset="0" stopColor="#58d4f8" /><stop offset=".45" stopColor="#1c6aa8" /><stop offset="1" stopColor="#8fb4d4" /></radialGradient></defs>
          <circle cx="20" cy="20" r="18.500" fill="url(#orb)" stroke="#0c2440" strokeWidth="1.500" />
          <path d="M11 11q4-2 8 1l-2 8q-4-3-8-1z" fill="#f0642c" /><path d="M21 13q4 3 8 1l-2 8q-4 2-8-1z" fill="#9ccc3c" />
          <path d="M9 21q4-2 8 1l-2 7q-3-3-8-1z" fill="#58a8e8" /><path d="M18 23q4 3 8 1l-2 7q-4 2-8-1z" fill="#fcd038" />
        </svg>
      </button>
      <div className="flex gap-1">
        {TASKS.map((t, i) => (
          <button key={i} type="button" aria-label={t} className={`flex w-[58px] items-center justify-center rounded-sm border ${TASK_LOOK[taskLook(i)]}`}>
            <svg viewBox="0 0 32 32" className="h-[32px] w-[32px]" fill="none" aria-hidden="true">{TASK_ICONS[t]}</svg>
          </button>
        ))}
      </div>
      <div className="flex-1" />
      <div className="flex items-center gap-2 text-white">
        <svg viewBox="0 0 16 16" className="h-4 w-4" fill="none" stroke="#cfd4dc" aria-label="Keyboard" role="img"><path d="M7 6q1-3 6-4" /><rect x="1" y="7" width="14" height="7" fill="#8c929c" /><path d="M3 9.500h10M3 11.500h10" strokeDasharray="1.500 1" /></svg>
        <svg viewBox="0 0 16 16" className="h-4 w-4" aria-label="Help" role="img"><circle cx="8" cy="8" r="7.300" fill="#1c28b8" stroke="#c8d0f0" /><path d="M5.500 6q0-2.500 2.500-2.500t2.500 2.300q0 1.500-2.500 2.700v1M8 11v1.800" stroke="#fff" strokeWidth="1.600" fill="none" /></svg>
        <svg viewBox="0 0 12 26" className="h-[26px] w-3" fill="none" stroke="#fff" aria-label="Language bar" role="img"><path d="M5 5.500V2.500h5v4H7M2.500 5.500h5v4h-5z" /><path d="M3 19h5l-2.500 3z" fill="#fff" stroke="none" /></svg>
        <svg viewBox="0 0 8 6" className="mr-1 h-[6px] w-2" aria-label="Show hidden icons" role="img"><path d="M0 5h8L4 1z" fill="#fff" /></svg>
        <svg viewBox="0 0 16 16" className="h-4 w-4" aria-label="Action center" role="img"><path d="M2 1v15" stroke="#fff" strokeWidth="1.500" /><path d="M3 2h5l1 1h5v7H8L7 9H3z" fill="#fff" /><circle cx="11" cy="11" r="4.500" fill="#d82020" /><path d="M9 9l4 4M13 9l-4 4" stroke="#fff" strokeWidth="1.400" /></svg>
        <svg viewBox="0 0 16 16" className="h-4 w-4" fill="none" stroke="#fff" aria-label="Volume" role="img"><path d="M1 6h2l4-4v12l-4-4H1z" fill="#fff" /><path d="M9 5.500q2 2.500 0 5M11 4q3 4 0 8M13 2.500q4 5.500 0 11" /></svg>
        <svg viewBox="0 0 16 16" className="h-4 w-4" fill="none" stroke="#fff" aria-label="Network" role="img"><rect x="5" y="4" width="10" height="8" strokeWidth="1.500" /><path d="M10 12v2M6 14.500h8M2 1v3M5 1v3M1 4h5v2H1zM3.500 6v9H6" /></svg>
      </div>
      <div className={`ml-4 mr-[10px] flex flex-col justify-between py-1 text-center text-white ${UI}`}>
        <time>21:48</time>
        <time>2023/3/16</time>
      </div>
      <button type="button" aria-label="Show desktop" className="mr-px w-[13px] border border-[#6f84a4] bg-[linear-gradient(#5a6e90,#1a3358)]" />
    </footer>
  );
}

export default function App() {
  return (
    <div className="flex h-screen flex-col overflow-hidden bg-black text-black">
      <TitleBar />
      <div className="relative flex min-h-0 flex-1 flex-col">
        <MenuBar />
        <main className="flex min-h-0 flex-1">
          <LayerPanel />
          <div className="min-w-0 flex-1"><BoardCanvas /></div>
          <Coordinates />
        </main>
        <CommandBar />
        <MessageBar />
        <ChecklistEditor />
        <ResultsViewer />
        <Histogram />
      </div>
      <Taskbar />
    </div>
  );
}
